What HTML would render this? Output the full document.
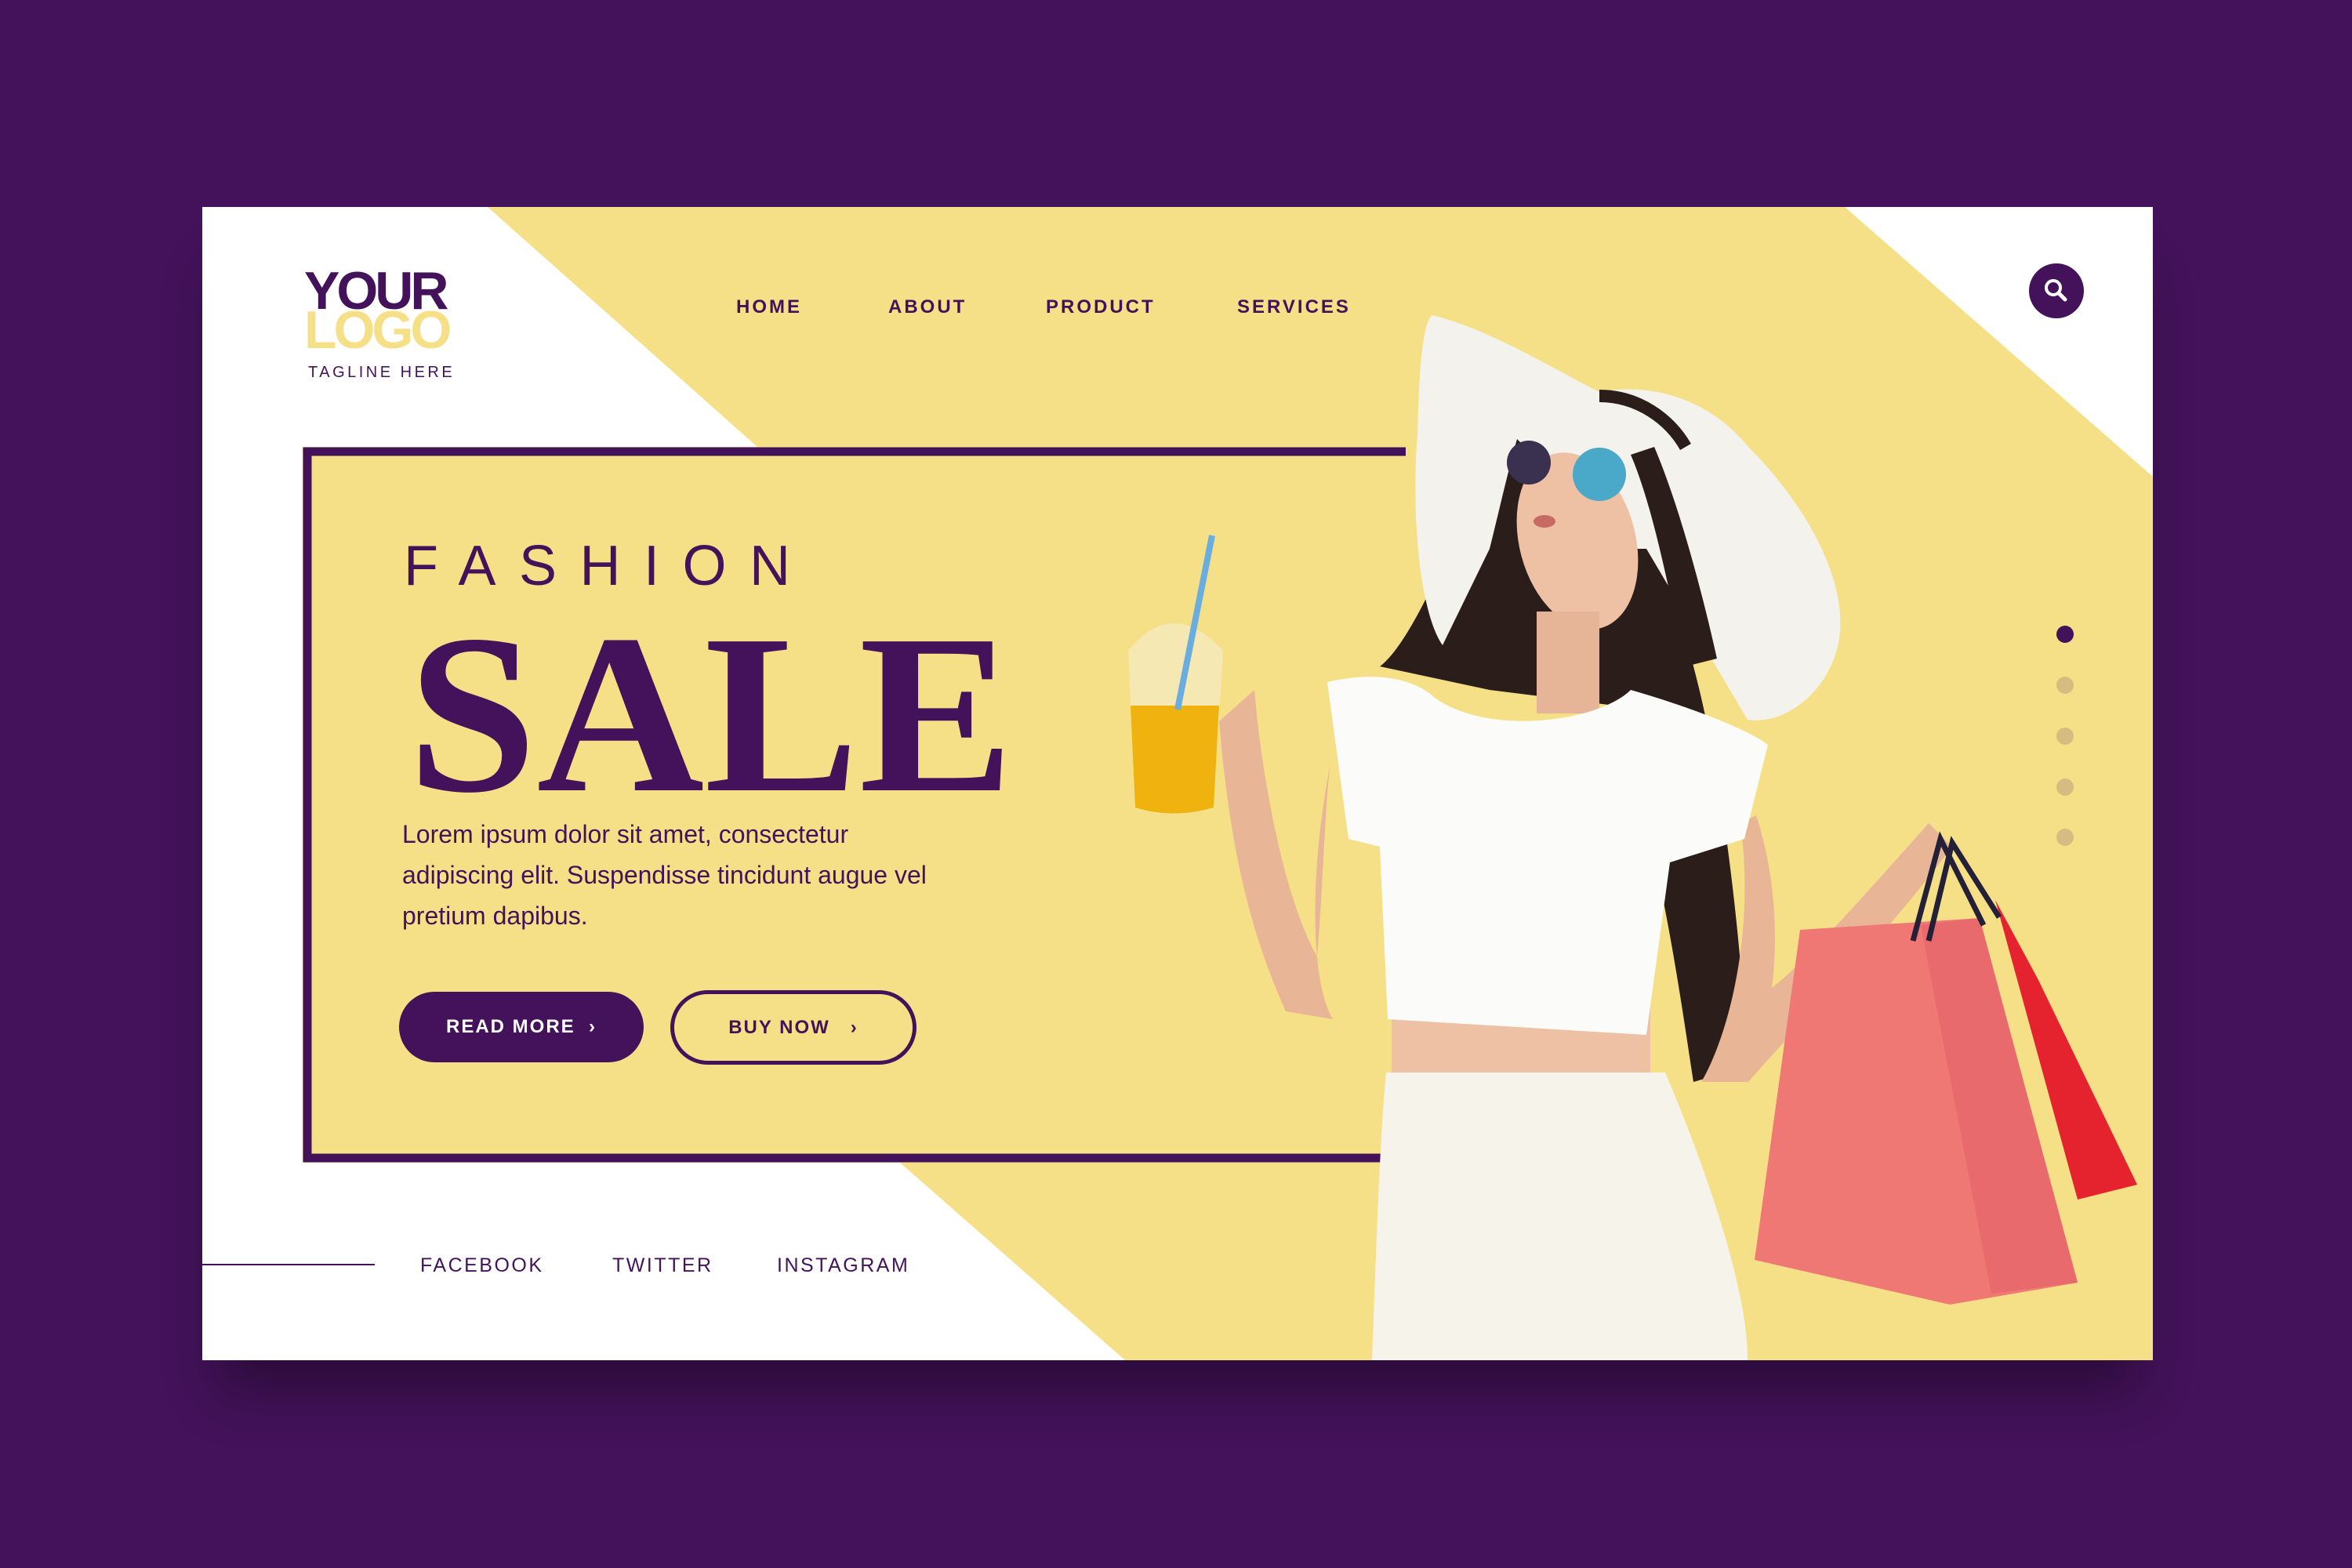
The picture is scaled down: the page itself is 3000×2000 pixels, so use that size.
<!DOCTYPE html>
<html><head><meta charset="utf-8"><style>
*{margin:0;padding:0;box-sizing:border-box}
body{width:3000px;height:2000px;background:#43125a;position:relative;overflow:hidden;font-family:"Liberation Sans",sans-serif;color:#43125a}
.card{position:absolute;left:258px;top:264px;width:2488px;height:1471px;background:#fff;box-shadow:0 60px 60px -20px rgba(0,0,0,.35)}
.abs{position:absolute}
.nav{position:absolute;top:378px;font-weight:bold;font-size:24px;letter-spacing:3px}
.soc{position:absolute;top:1600px;font-size:25px;letter-spacing:2.5px}
</style></head><body>
<div class="card"></div>
<svg class="abs" style="left:0;top:0" width="3000" height="2000" viewBox="0 0 3000 2000">
<polygon points="622,264 2353,264 2746,608 2746,1735 1435,1735 1148,1483 386,1483 386,570 966,570" fill="#f6e087"/>
<rect x="392" y="576" width="1420" height="901" fill="none" stroke="#43125a" stroke-width="11"/>
<rect x="1793" y="560" width="100" height="930" fill="#f6e087"/>
<!-- cup -->
<path d="M1439,830 Q1496,760 1560,830 L1548,1030 Q1496,1045 1448,1030Z" fill="#f3efe0" opacity=".5"/>
<path d="M1442,900 L1555,900 L1548,1030 Q1496,1045 1448,1030Z" fill="#efb20f"/>
<line x1="1546" y1="683" x2="1502" y2="905" stroke="#6aaee0" stroke-width="8"/>
<!-- hair back -->
<path d="M1910,560 C1850,700 1800,820 1760,850 L1900,880 L2060,900 C2120,1100 2140,1250 2160,1380 L2230,1360 C2220,1200 2200,1000 2160,850 C2130,700 2090,600 2050,540Z" fill="#2a1d1a"/>
<!-- hat -->
<path d="M1827,402 C1900,420 1980,470 2040,500 C2120,485 2190,520 2230,570 C2300,640 2360,740 2345,820 C2330,890 2270,925 2229,918 L2100,700 L1900,700 L1840,823 C1810,780 1800,650 1808,555 C1810,470 1815,410 1827,402Z" fill="#f4f2ec"/>
<path d="M2040,505 C2090,505 2130,535 2150,570" stroke="#2a1d1a" stroke-width="16" fill="none"/>
<!-- hair sides -->
<path d="M1935,560 C1910,650 1890,760 1860,830 L1930,840 C1950,760 1960,680 1975,600Z" fill="#2a1d1a"/>
<path d="M2080,580 C2110,650 2130,760 2150,850 L2190,840 C2170,750 2140,640 2110,570Z" fill="#2a1d1a"/>
<!-- face -->
<ellipse cx="2012" cy="690" rx="74" ry="115" fill="#eec0a4" transform="rotate(-15 2012 690)"/>
<rect x="1960" y="780" width="80" height="130" fill="#e6b497"/>
<circle cx="1950" cy="590" r="28" fill="#3a3050"/>
<circle cx="2040" cy="605" r="34" fill="#4aa8c8"/>
<ellipse cx="1970" cy="665" rx="14" ry="8" fill="#c76a62"/>
<!-- left arm -->
<path d="M1700,960 C1670,1100 1670,1250 1700,1300 L1640,1290 C1600,1200 1570,1100 1555,920 L1600,880 C1610,1000 1640,1150 1680,1220 C1690,1100 1690,1000 1700,960Z" fill="#e8b596"/>
<!-- right arm -->
<path d="M2220,1050 C2240,1200 2200,1330 2170,1380 L2230,1380 C2300,1300 2400,1200 2490,1080 L2460,1050 C2380,1140 2300,1230 2260,1260 C2270,1180 2260,1100 2240,1040Z" fill="#e8b596"/>
<rect x="1775" y="1280" width="330" height="100" fill="#eec0a4"/>
<!-- shirt -->
<path d="M1693,870 C1780,850 1820,880 1830,890 C1900,940 2040,920 2080,880 C2150,900 2230,930 2255,950 L2225,1070 L2130,1100 L2100,1320 L1770,1300 L1760,1080 L1720,1070Z" fill="#fbfbf9"/>
<!-- skirt -->
<path d="M1768,1368 L2124,1368 C2180,1500 2230,1650 2229,1735 L1750,1735 C1755,1600 1760,1450 1768,1368Z" fill="#f6f3ea"/>
<!-- bags -->
<polygon points="2545,1148 2600,1250 2726,1511 2650,1530" fill="#e4232e"/>
<polygon points="2296,1186 2525,1171 2650,1636 2487,1664 2238,1607" fill="#ef7874"/>
<polygon points="2450,1180 2525,1171 2650,1636 2540,1650" fill="#e96a6c"/>
<path d="M2440,1200 L2475,1070 L2530,1180 M2460,1200 L2490,1075 L2550,1170" stroke="#232038" stroke-width="7" fill="none"/>
<!-- search -->
<circle cx="2623" cy="371" r="35" fill="#43125a"/>
<circle cx="2619" cy="367" r="9" stroke="#fff" stroke-width="4" fill="none"/>
<line x1="2626" y1="374" x2="2634" y2="382" stroke="#fff" stroke-width="5" stroke-linecap="round"/>
<circle cx="2634" cy="809" r="11" fill="#43125a"/>
<circle cx="2634" cy="874" r="11" fill="#d5bd82"/>
<circle cx="2634" cy="939" r="11" fill="#d5bd82"/>
<circle cx="2634" cy="1004" r="11" fill="#d5bd82"/>
<circle cx="2634" cy="1068" r="11" fill="#d5bd82"/>
<line x1="258" y1="1613" x2="478" y2="1613" stroke="#43125a" stroke-width="2"/>
<text x="520" y="1008" font-family="Liberation Serif,serif" font-weight="bold" font-size="290" fill="#43125a" textLength="773" lengthAdjust="spacingAndGlyphs">SALE</text>
<text x="515" y="746" font-family="Liberation Sans,sans-serif" font-size="72" fill="#43125a" textLength="493" lengthAdjust="spacing">FASHION</text>
</svg>
<div class="abs" style="left:388px;top:346px;font-weight:bold;font-size:68px;line-height:50px;letter-spacing:-4px">YOUR<br><span style="color:#f6e087">LOGO</span></div>
<div class="abs" style="left:393px;top:464px;font-size:20px;letter-spacing:3.5px">TAGLINE HERE</div>
<div class="nav" style="left:939px">HOME</div>
<div class="nav" style="left:1133px">ABOUT</div>
<div class="nav" style="left:1334px">PRODUCT</div>
<div class="nav" style="left:1578px">SERVICES</div>
<div class="abs" style="left:513px;top:1038px;width:800px;font-size:32px;line-height:52px;white-space:nowrap">Lorem ipsum dolor sit amet, consectetur<br>adipiscing elit. Suspendisse tincidunt augue vel<br>pretium dapibus.</div>
<div class="abs" style="left:509px;top:1265px;width:312px;height:90px;border-radius:45px;background:#43125a;color:#fff;font-weight:bold;font-size:24px;letter-spacing:2px;line-height:90px;text-align:center">READ MORE &nbsp;›</div>
<div class="abs" style="left:855px;top:1263px;width:314px;height:95px;border-radius:48px;border:5px solid #43125a;font-weight:bold;font-size:24px;letter-spacing:2px;line-height:85px;text-align:center">BUY NOW &nbsp;&nbsp;›</div>
<div class="soc" style="left:536px">FACEBOOK</div>
<div class="soc" style="left:781px">TWITTER</div>
<div class="soc" style="left:991px">INSTAGRAM</div>
</body></html>
